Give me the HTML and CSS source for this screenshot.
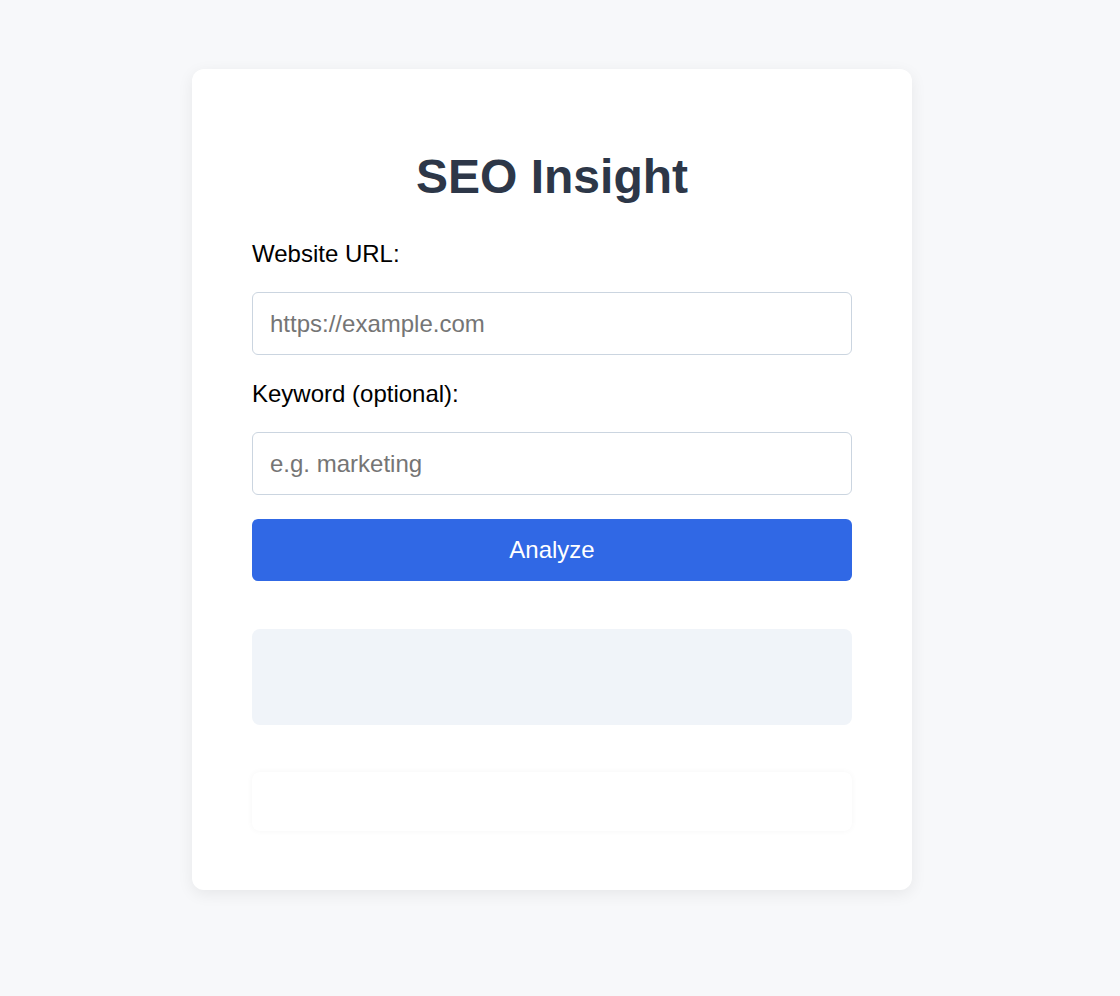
FILE: index.html
```html
<!DOCTYPE html>
<html lang="en">
<head>
<meta charset="utf-8">
<title>SEO Insight</title>
<link rel="stylesheet" href="styles.css">
</head>
<body>
<main class="card">
  <h1 class="title">SEO Insight</h1>
  <form class="form">
    <label class="label" for="url">Website URL:</label>
    <input class="input" id="url" type="text" placeholder="https://example.com">
    <label class="label" for="kw">Keyword (optional):</label>
    <input class="input" id="kw" type="text" placeholder="e.g. marketing">
    <button class="btn" type="button">Analyze</button>
  </form>
  <section class="results"></section>
  <section class="panel"></section>
</main>
</body>
</html>
```

FILE: styles.css
```css
* { box-sizing: border-box; }
html, body { margin: 0; padding: 0; }
body {
  background: #f7f8fa;
  font-family: "Liberation Sans", Arial, sans-serif;
  padding: 69px 0 0 192px;
  min-height: 996px;
}
.card {
  width: 720px;
  background: #ffffff;
  border-radius: 12px;
  box-shadow: 0 4px 16px rgba(0, 0, 0, 0.07);
  padding: 60px 60px 59px;
}
.title {
  margin: 20px 0 35px;
  font-size: 48px;
  line-height: 56px;
  font-weight: 700;
  color: #2d3748;
  text-align: center;
}
.form { display: flex; flex-direction: column; }
.label {
  display: block;
  font-size: 24px;
  line-height: 28px;
  color: #000;
  margin-bottom: 24px;
}
.input {
  height: 63px;
  border: 1px solid #cbd5e0;
  border-radius: 6px;
  padding: 0 17px;
  font-family: "Liberation Sans", Arial, sans-serif;
  font-size: 24px;
  color: #000;
  margin-bottom: 25px;
  outline: none;
}
.input:last-of-type { margin-bottom: 24px; }
.input::placeholder { color: #757575; }
.btn {
  height: 62px;
  border: none;
  border-radius: 6px;
  background: #3068e5;
  color: #fff;
  font-family: "Liberation Sans", Arial, sans-serif;
  font-size: 24px;
}
.results {
  margin-top: 48px;
  height: 96px;
  background: #f0f4f9;
  border-radius: 8px;
}
.panel {
  margin-top: 47px;
  height: 59px;
  background: #fff;
  border-radius: 8px;
  box-shadow: 0 0 6px rgba(0, 0, 0, 0.04);
}
```
